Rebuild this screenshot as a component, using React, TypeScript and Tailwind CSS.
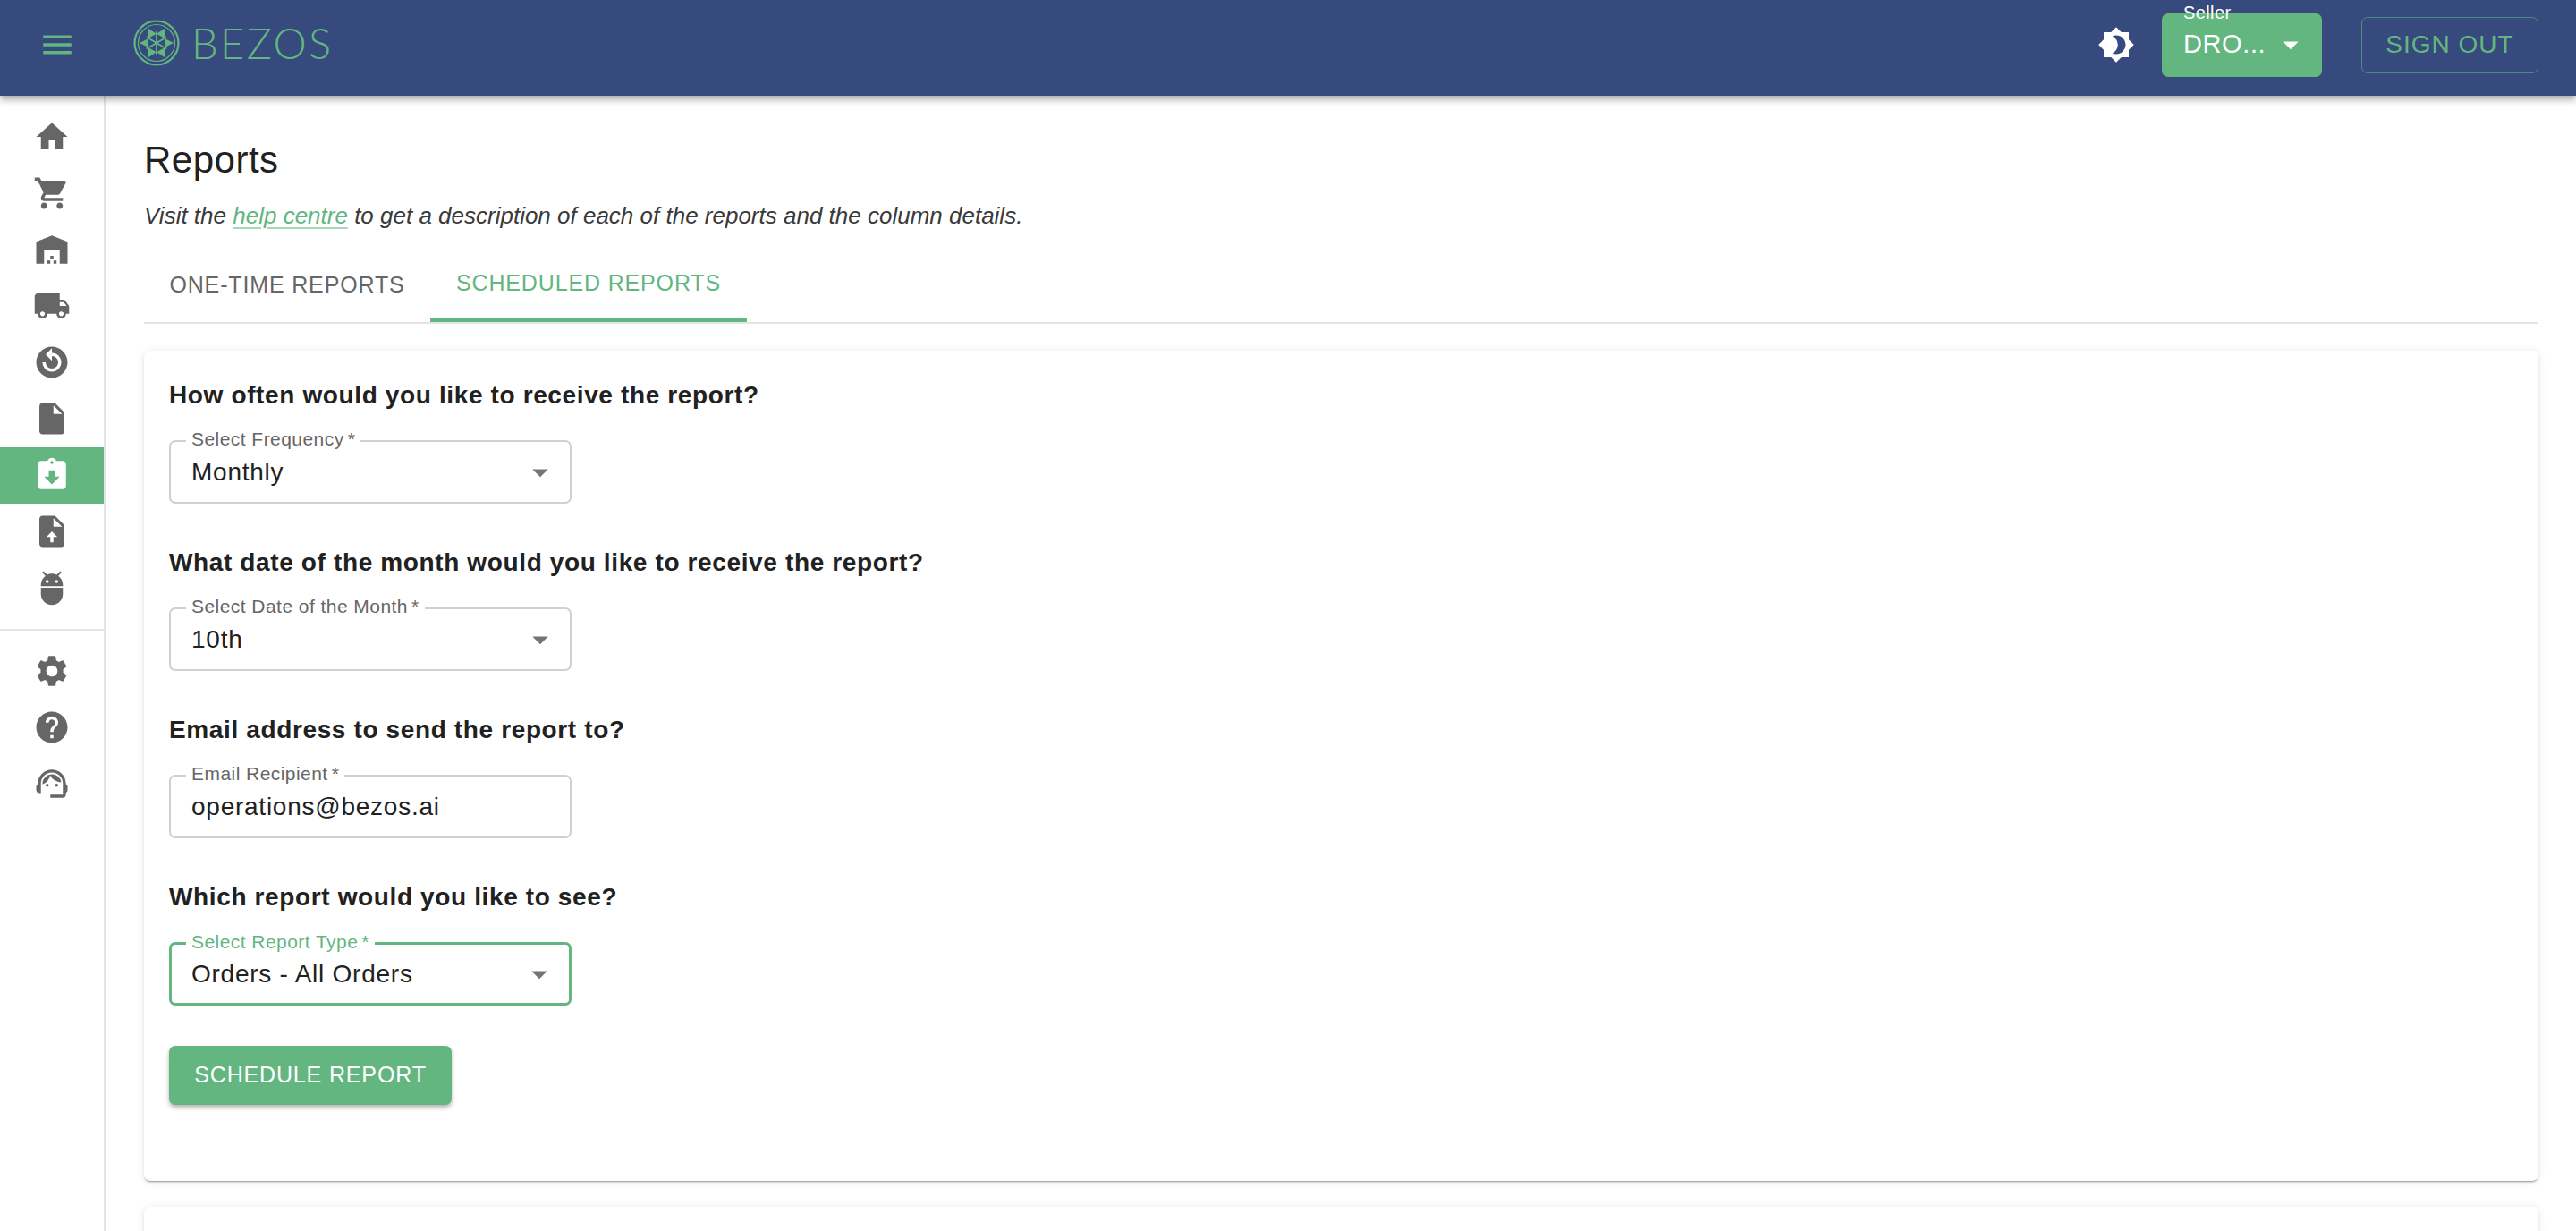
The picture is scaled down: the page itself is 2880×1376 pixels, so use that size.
import {
  MdAdb,
  MdArrowDropDown,
  MdAssignmentReturned,
  MdBrightness4,
  MdHelp,
  MdHome,
  MdInsertDriveFile,
  MdLocalShipping,
  MdMenu,
  MdReplayCircleFilled,
  MdSettings,
  MdShoppingCart,
  MdSupportAgent,
  MdWarehouse,
} from 'react-icons/md';

// filled file with a white up arrow, the outlined one in the icon pack doesn't match
function UploadFileIcon({ size }: { size: number }) {
  return (
    <svg width={size} height={size} viewBox="0 0 24 24">
      <path fill="currentColor" d="M14 2H6c-1.1 0-1.99.9-1.99 2L4 20c0 1.1.89 2 1.99 2H18c1.1 0 2-.9 2-2V8l-6-6zm-1 7V3.5L18.5 9H13z" />
      <path fill="#ffffff" d="M13 19h-2v-3.5H8.5L12 12l3.5 3.5H13z" />
    </svg>
  );
}

const mainNav = [
  { icon: MdHome },
  { icon: MdShoppingCart },
  { icon: MdWarehouse },
  { icon: MdLocalShipping },
  { icon: MdReplayCircleFilled },
  { icon: MdInsertDriveFile },
  { icon: MdAssignmentReturned, active: true },
  { icon: UploadFileIcon },
  { icon: MdAdb },
];

const bottomNav = [{ icon: MdSettings }, { icon: MdHelp }, { icon: MdSupportAgent }];

function NavItem({ icon: Icon, active }: { icon: React.ComponentType<{ size: number }>; active?: boolean }) {
  return (
    <div className={`flex h-[63px] items-center justify-center pb-[2px] ${active ? 'bg-[#63b67f] text-white' : 'text-[#666666]'}`}>
      <Icon size={42} />
    </div>
  );
}

function Logo() {
  const petals = [0, 60, 120, 180, 240, 300];
  return (
    <svg width="52" height="52" viewBox="0 0 52 52" fill="none" stroke="#63b67f">
      <circle cx="26" cy="26" r="24.5" strokeWidth="2.2" />
      <circle cx="26" cy="26" r="20.5" strokeWidth="1.2" />
      {petals.map((a) => (
        <g key={a} transform={`rotate(${a} 26 26)`}>
          <path d="M26 26V13" strokeWidth="1.8" />
          <path d="M26 7 L21 17 L31 17 Z" fill="#63b67f" stroke="none" transform="rotate(30 26 26)" />
        </g>
      ))}
    </svg>
  );
}

function Field({
  label,
  value,
  select,
  focused,
  className,
}: {
  label: string;
  value: string;
  select?: boolean;
  focused?: boolean;
  className?: string;
}) {
  return (
    <div
      className={`relative flex h-[71px] w-[450px] items-center justify-between rounded-[7px] pr-[12px] text-[28px] tracking-[0.75px] text-[#212121] ${
        focused ? 'border-[3px] border-[#63b67f] pl-[22px]' : 'border-2 border-[#d0d0d0] pl-[23px]'
      } ${className ?? ''}`}
    >
      <span
        className={`absolute bg-white px-[6px] text-[21px] leading-[24px] tracking-[0.45px] ${
          focused ? 'left-[16px] top-[-15px] text-[#63b67f]' : 'left-[17px] top-[-15px] text-[#666666]'
        }`}
      >
        {label}
        <span className="ml-[4px]">*</span>
      </span>
      <span>{value}</span>
      {select && <MdArrowDropDown size={42} className="text-[#757575]" />}
    </div>
  );
}

const headingClass = 'text-[28px] font-bold leading-[34px] tracking-[0.63px] text-[#212121]';
const cardShadow = 'shadow-[0_2px_2px_-1px_rgba(0,0,0,0.4),0_1px_10px_rgba(0,0,0,0.1)]';

export default function App() {
  return (
    <div className="flex h-[1376px] flex-col overflow-hidden bg-white font-['Liberation_Sans',Arial,sans-serif]">
      <header className="relative z-10 flex h-[107px] shrink-0 items-center bg-[#374a7d] pb-[7px] pl-[43px] pr-[42px] shadow-[0_4px_8px_rgba(0,0,0,0.35)]">
        <MdMenu size={42} className="text-[#63b67f]" />
        <div className="ml-[64px] mt-[-4px] flex items-center">
          <Logo />
          <span className="ml-[13px] font-['Lato',sans-serif] text-[47px] font-light leading-none tracking-[2.4px] text-[#63b67f]">BEZOS</span>
        </div>
        <div className="ml-auto flex items-center">
          <MdBrightness4 size={42} className="text-white" />
          <div className="relative ml-[30px] flex h-[71px] w-[179px] items-center justify-between rounded-[7px] bg-[#63b67f] pl-[24px] pr-[14px] text-[29px] tracking-[0.6px] text-white">
            <span className="absolute left-[24px] top-[-13px] text-[20px] leading-[24px] tracking-[0.4px]">Seller</span>
            <span>DRO...</span>
            <MdArrowDropDown size={42} />
          </div>
          <div className="ml-[44px] flex h-[63px] w-[198px] items-center justify-center rounded-[7px] border border-[#4f8a7c] text-[28px] tracking-[1px] text-[#63b67f]">
            SIGN OUT
          </div>
        </div>
      </header>

      <div className="flex min-h-0 flex-1">
        <nav className="w-[118px] shrink-0 border-r-2 border-[#e4e4e4] pt-[15px]">
          {mainNav.map((item, i) => (
            <NavItem key={i} icon={item.icon} active={item.active} />
          ))}
          <div className="my-[14px] h-[2px] bg-[#e4e4e4]" />
          {bottomNav.map((item, i) => (
            <NavItem key={i} icon={item.icon} />
          ))}
        </nav>

        <main className="min-w-0 flex-1 pl-[43px] pr-[42px] pt-[50px]">
          <h1 className="text-[42px] leading-[44px] tracking-[0.5px] text-[#212121]">Reports</h1>
          <p className="mt-[25px] text-[26px] italic leading-[30px] text-[#3a3a3a]">
            Visit the <span className="text-[#63b67f] underline decoration-[#a9d8b9] underline-offset-4">help centre</span> to get a
            description of each of the reports and the column details.
          </p>
          <div className="mt-[18px] flex h-[88px] border-b-2 border-[#e4e4e4] text-[25px] tracking-[0.85px]">
            <div className="flex w-[320px] items-center justify-center pt-[3px] text-[#666666]">ONE-TIME REPORTS</div>
            <div className="flex w-[354px] items-center justify-center border-b-[4px] border-[#63b67f] pt-[3px] text-[#63b67f]">
              SCHEDULED REPORTS
            </div>
          </div>

          <section className={`mt-[30px] h-[928px] rounded-[7px] bg-white px-[28px] pt-[33px] ${cardShadow}`}>
            <h2 className={headingClass}>How often would you like to receive the report?</h2>
            <Field className="mt-[33px]" label="Select Frequency" value="Monthly" select />
            <h2 className={`mt-[49px] ${headingClass}`}>What date of the month would you like to receive the report?</h2>
            <Field className="mt-[33px]" label="Select Date of the Month" value="10th" select />
            <h2 className={`mt-[49px] ${headingClass}`}>Email address to send the report to?</h2>
            <Field className="mt-[33px]" label="Email Recipient" value="operations@bezos.ai" />
            <h2 className={`mt-[49px] ${headingClass}`}>Which report would you like to see?</h2>
            <Field className="mt-[33px]" label="Select Report Type" value="Orders - All Orders" select focused />
            <button className="mt-[45px] flex h-[66px] w-[316px] items-center justify-center rounded-[7px] bg-[#63b67f] text-[25px] tracking-[0.85px] text-white shadow-[0_3px_5px_rgba(0,0,0,0.3)]">
              SCHEDULE REPORT
            </button>
          </section>
          <section className={`mt-[29px] h-[100px] rounded-[7px] bg-white ${cardShadow}`} />
        </main>
      </div>
    </div>
  );
}
